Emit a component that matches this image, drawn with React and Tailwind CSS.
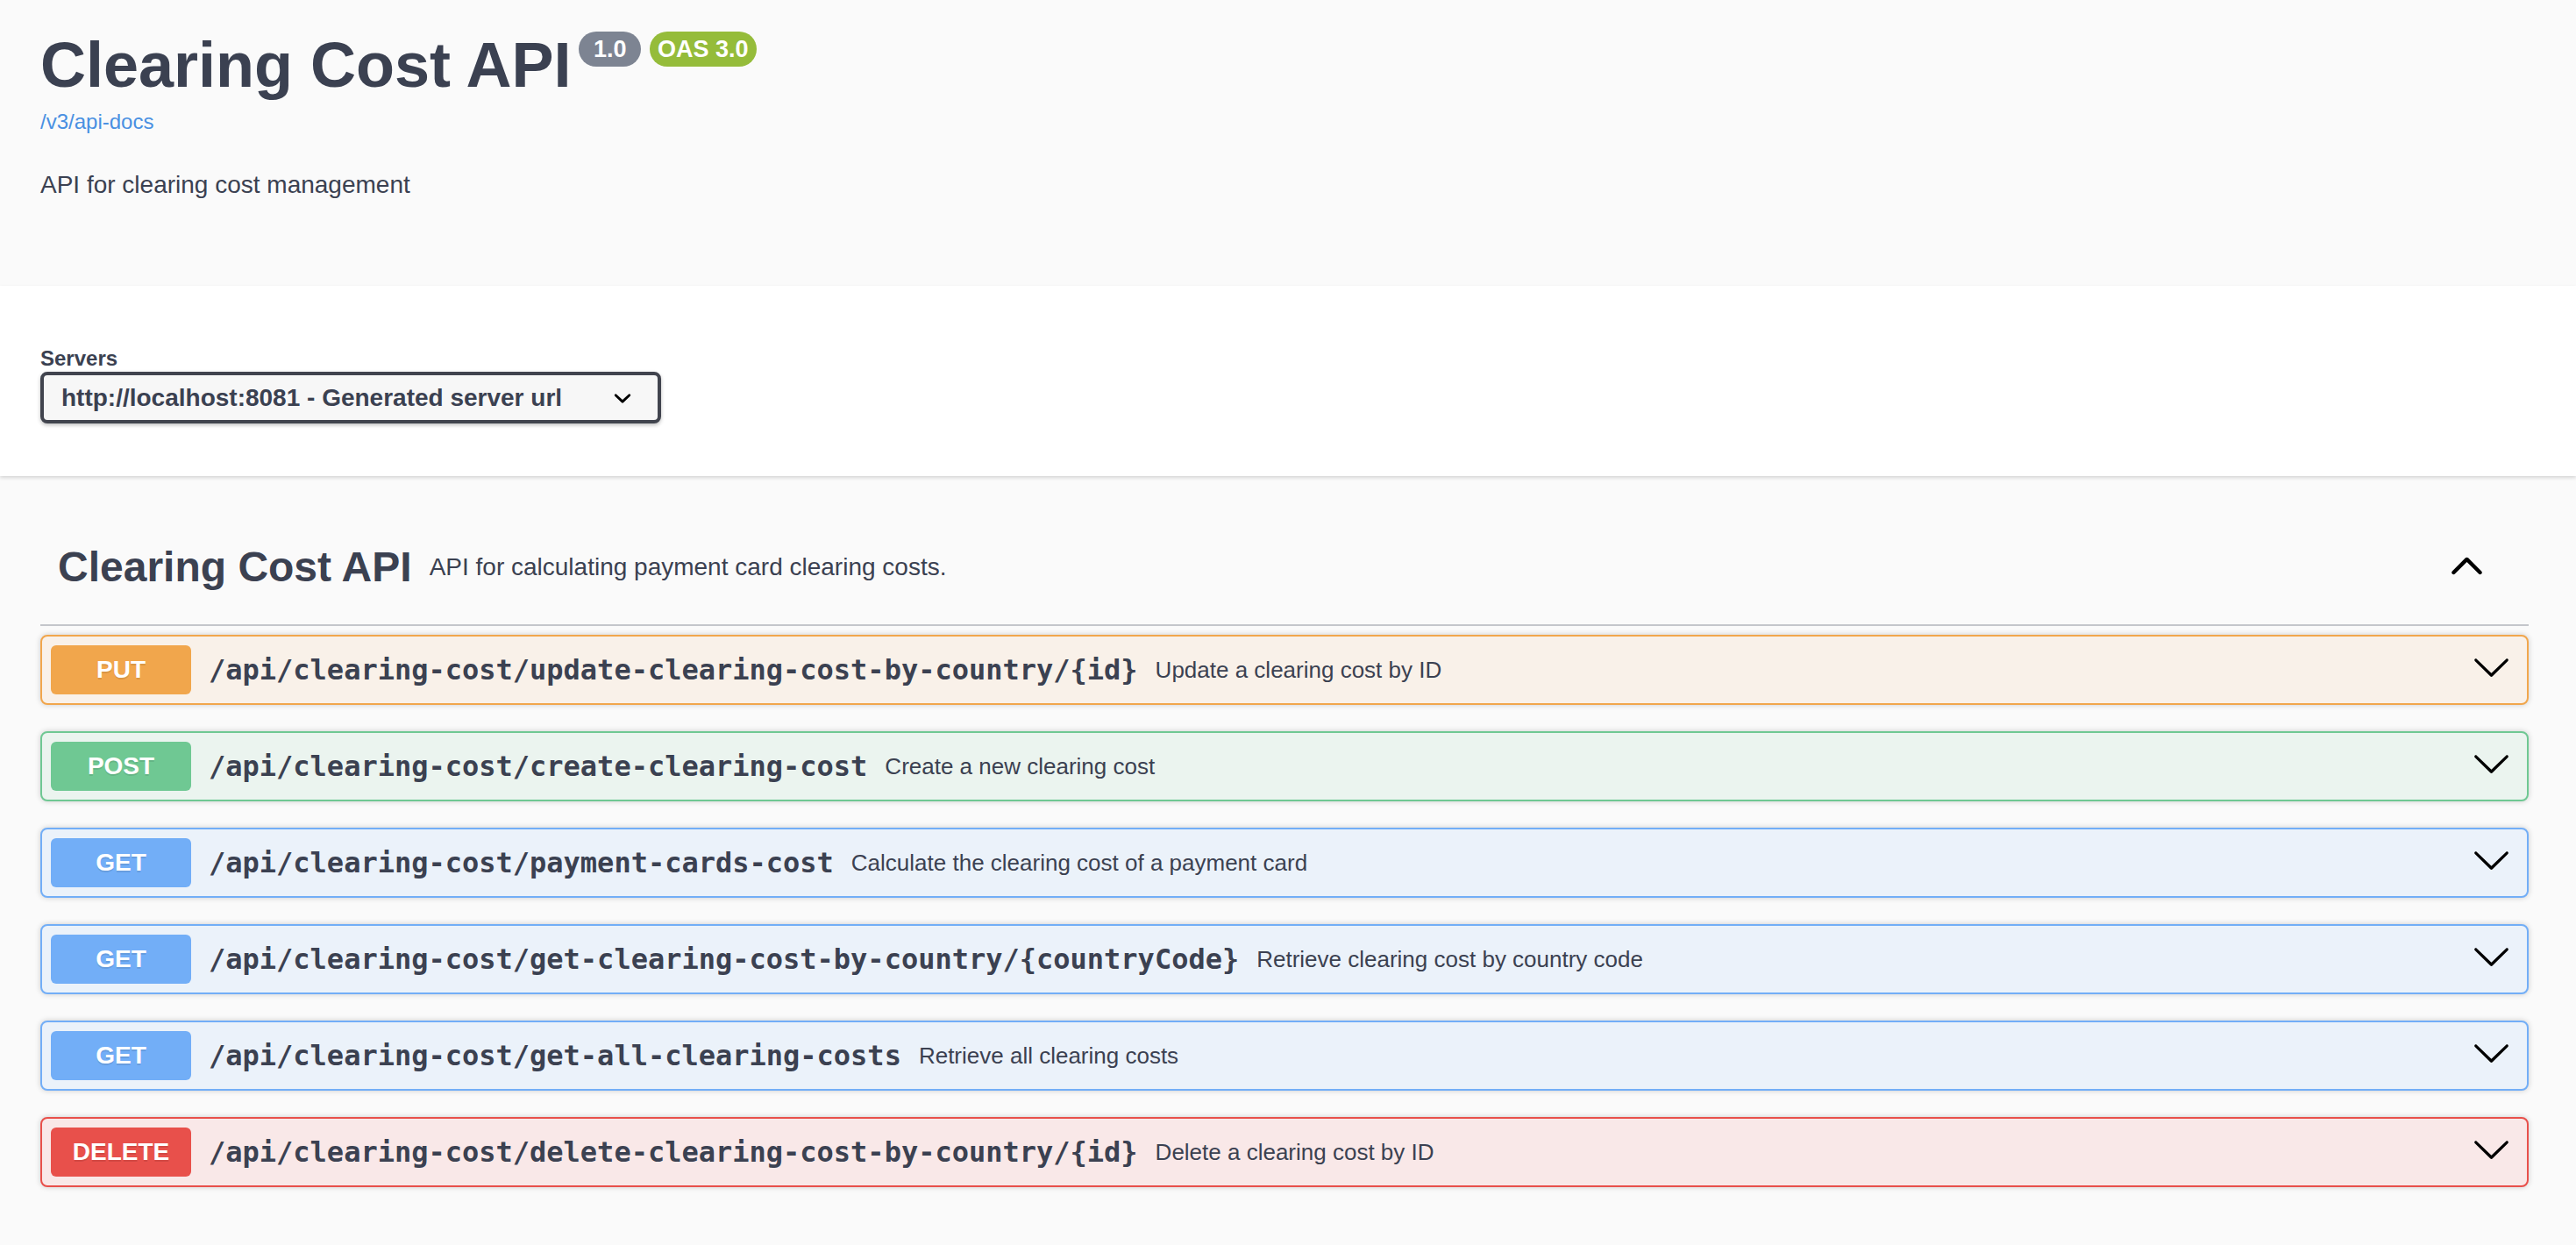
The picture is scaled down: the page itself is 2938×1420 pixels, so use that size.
import React from 'react';

const operations = [
  {
    method: 'PUT',
    path: '/api/clearing-cost/update-clearing-cost-by-country/{id}',
    summary: 'Update a clearing cost by ID',
    box: 'border-[#f1a64c] bg-[#f9f1e9]',
    badge: 'bg-[#f1a64c]',
  },
  {
    method: 'POST',
    path: '/api/clearing-cost/create-clearing-cost',
    summary: 'Create a new clearing cost',
    box: 'border-[#6fc893] bg-[#ebf4ef]',
    badge: 'bg-[#6fc893]',
  },
  {
    method: 'GET',
    path: '/api/clearing-cost/payment-cards-cost',
    summary: 'Calculate the clearing cost of a payment card',
    box: 'border-[#72aef7] bg-[#ebf2fa]',
    badge: 'bg-[#72aef7]',
  },
  {
    method: 'GET',
    path: '/api/clearing-cost/get-clearing-cost-by-country/{countryCode}',
    summary: 'Retrieve clearing cost by country code',
    box: 'border-[#72aef7] bg-[#ebf2fa]',
    badge: 'bg-[#72aef7]',
  },
  {
    method: 'GET',
    path: '/api/clearing-cost/get-all-clearing-costs',
    summary: 'Retrieve all clearing costs',
    box: 'border-[#72aef7] bg-[#ebf2fa]',
    badge: 'bg-[#72aef7]',
  },
  {
    method: 'DELETE',
    path: '/api/clearing-cost/delete-clearing-cost-by-country/{id}',
    summary: 'Delete a clearing cost by ID',
    box: 'border-[#e8504b] bg-[#f9e8e8]',
    badge: 'bg-[#e8504b]',
  },
];

const ArrowUp = ({ className }) => (
  <svg className={className} width="45" height="45" viewBox="0 0 20 20" aria-hidden="true">
    <path
      fill="#000"
      d="M17.418 14.908c-.189.189-.441.283-.692.283-.251 0-.503-.094-.692-.283L10 8.876l-6.034 6.032c-.189.189-.441.283-.692.283s-.503-.094-.692-.283a.978.978 0 010-1.383l6.726-6.726c.189-.189.441-.283.692-.283s.503.094.692.283l6.726 6.726a.978.978 0 01-.001 1.383z"
    />
  </svg>
);

const ArrowDown = ({ className }) => (
  <svg className={className} width="45" height="45" viewBox="0 0 20 20" aria-hidden="true">
    <path
      fill="#000"
      d="M17.418 6.109c.272-.268.709-.268.979 0s.271.701 0 .969l-7.908 7.83c-.27.268-.707.268-.979 0l-7.908-7.83c-.27-.268-.27-.701 0-.969.271-.268.709-.268.979 0L10 13.25l7.418-7.141z"
    />
  </svg>
);

const OperationRow = ({ op }) => (
  <div className={`flex items-center rounded-[8px] border-2 p-[10px] shadow-[0_0_6px_rgba(0,0,0,0.19)] ${op.box}`}>
    <span
      className={`flex h-[56px] w-[160px] shrink-0 items-center justify-center rounded-[6px] text-[28px] font-bold text-white [text-shadow:0_2px_0_rgba(0,0,0,0.1)] ${op.badge}`}
    >
      {op.method}
    </span>
    <span className="px-[20px] font-['DejaVu_Sans_Mono',monospace] text-[32px] font-bold text-[#3b4151]">
      {op.path}
    </span>
    <span className="flex-1 text-[26px] text-[#3b4151]">{op.summary}</span>
    <ArrowDown className="mr-[8px] mb-[8px] shrink-0" />
  </div>
);

const App = () => {
  return (
    <div className="min-h-screen bg-[#fafafa] pb-[60px] font-['Liberation_Sans',Arial,sans-serif] text-[#3b4151]">
      <section className="pl-[46px] pr-[54px] pt-[38px] pb-[95px]">
        <div className="flex items-start">
          <h1 className="text-[72px] font-bold leading-[72px]">Clearing Cost API</h1>
          <div className="-mt-[2px] ml-[9px] flex gap-[10px]">
            <span className="flex h-[40px] items-center whitespace-pre rounded-full bg-[#7d8492] px-[9px] text-[27px] font-bold text-white">
              {' 1.0 '}
            </span>
            <span className="flex h-[40px] items-center rounded-full bg-[#95bc3a] px-[9px] text-[27px] font-bold text-white">
              OAS 3.0
            </span>
          </div>
        </div>
        <a href="#" className="mt-[15px] block text-[24px] leading-[28px] text-[#4990e2]">
          /v3/api-docs
        </a>
        <p className="mt-[38px] text-[28px] leading-[40px]">API for clearing cost management</p>
      </section>

      <section className="bg-white pl-[46px] pr-[54px] pt-[69px] pb-[60px] shadow-[0_2px_4px_rgba(0,0,0,0.15)]">
        <div className="text-[24px] font-bold leading-[28px]">Servers</div>
        <div className="mt-[1px] flex h-[59px] w-[708px] items-center justify-between rounded-[8px] border-[4px] border-[#41444e] bg-[#f7f7f7] pl-[20px] pr-[20px] shadow-[0_2px_4px_rgba(0,0,0,0.25)]">
          <span className="text-[28px] font-bold">http://localhost:8081 - Generated server url</span>
          <svg width="40" height="40" viewBox="0 0 20 20" aria-hidden="true">
            <path
              fill="#000"
              d="M13.418 7.859a.695.695 0 01.978 0 .68.68 0 010 .969l-3.908 3.83a.697.697 0 01-.979 0l-3.908-3.830a.68.68 0 010-.969.695.695 0 01.978 0L10 11l3.418-3.141z"
            />
          </svg>
        </div>
      </section>

      <main className="mt-[40px] pl-[46px] pr-[54px]">
        <div className="border-b-2 border-[#c4c6cb] pl-[20px] pr-[48px] pt-[19px] pb-[20px]">
          <div className="flex h-[90px] items-center">
            <h3 className="text-[48px] font-bold leading-[56px]">Clearing Cost API</h3>
            <small className="flex-1 px-[20px] text-[28px]">API for calculating payment card clearing costs.</small>
            <ArrowUp className="mb-[7px] shrink-0" />
          </div>
        </div>

        <div className="mt-[10px] flex flex-col gap-[30px]">
          {operations.map((op) => (
            <OperationRow key={op.method + op.path} op={op} />
          ))}
        </div>
      </main>
    </div>
  );
};

export default App;
